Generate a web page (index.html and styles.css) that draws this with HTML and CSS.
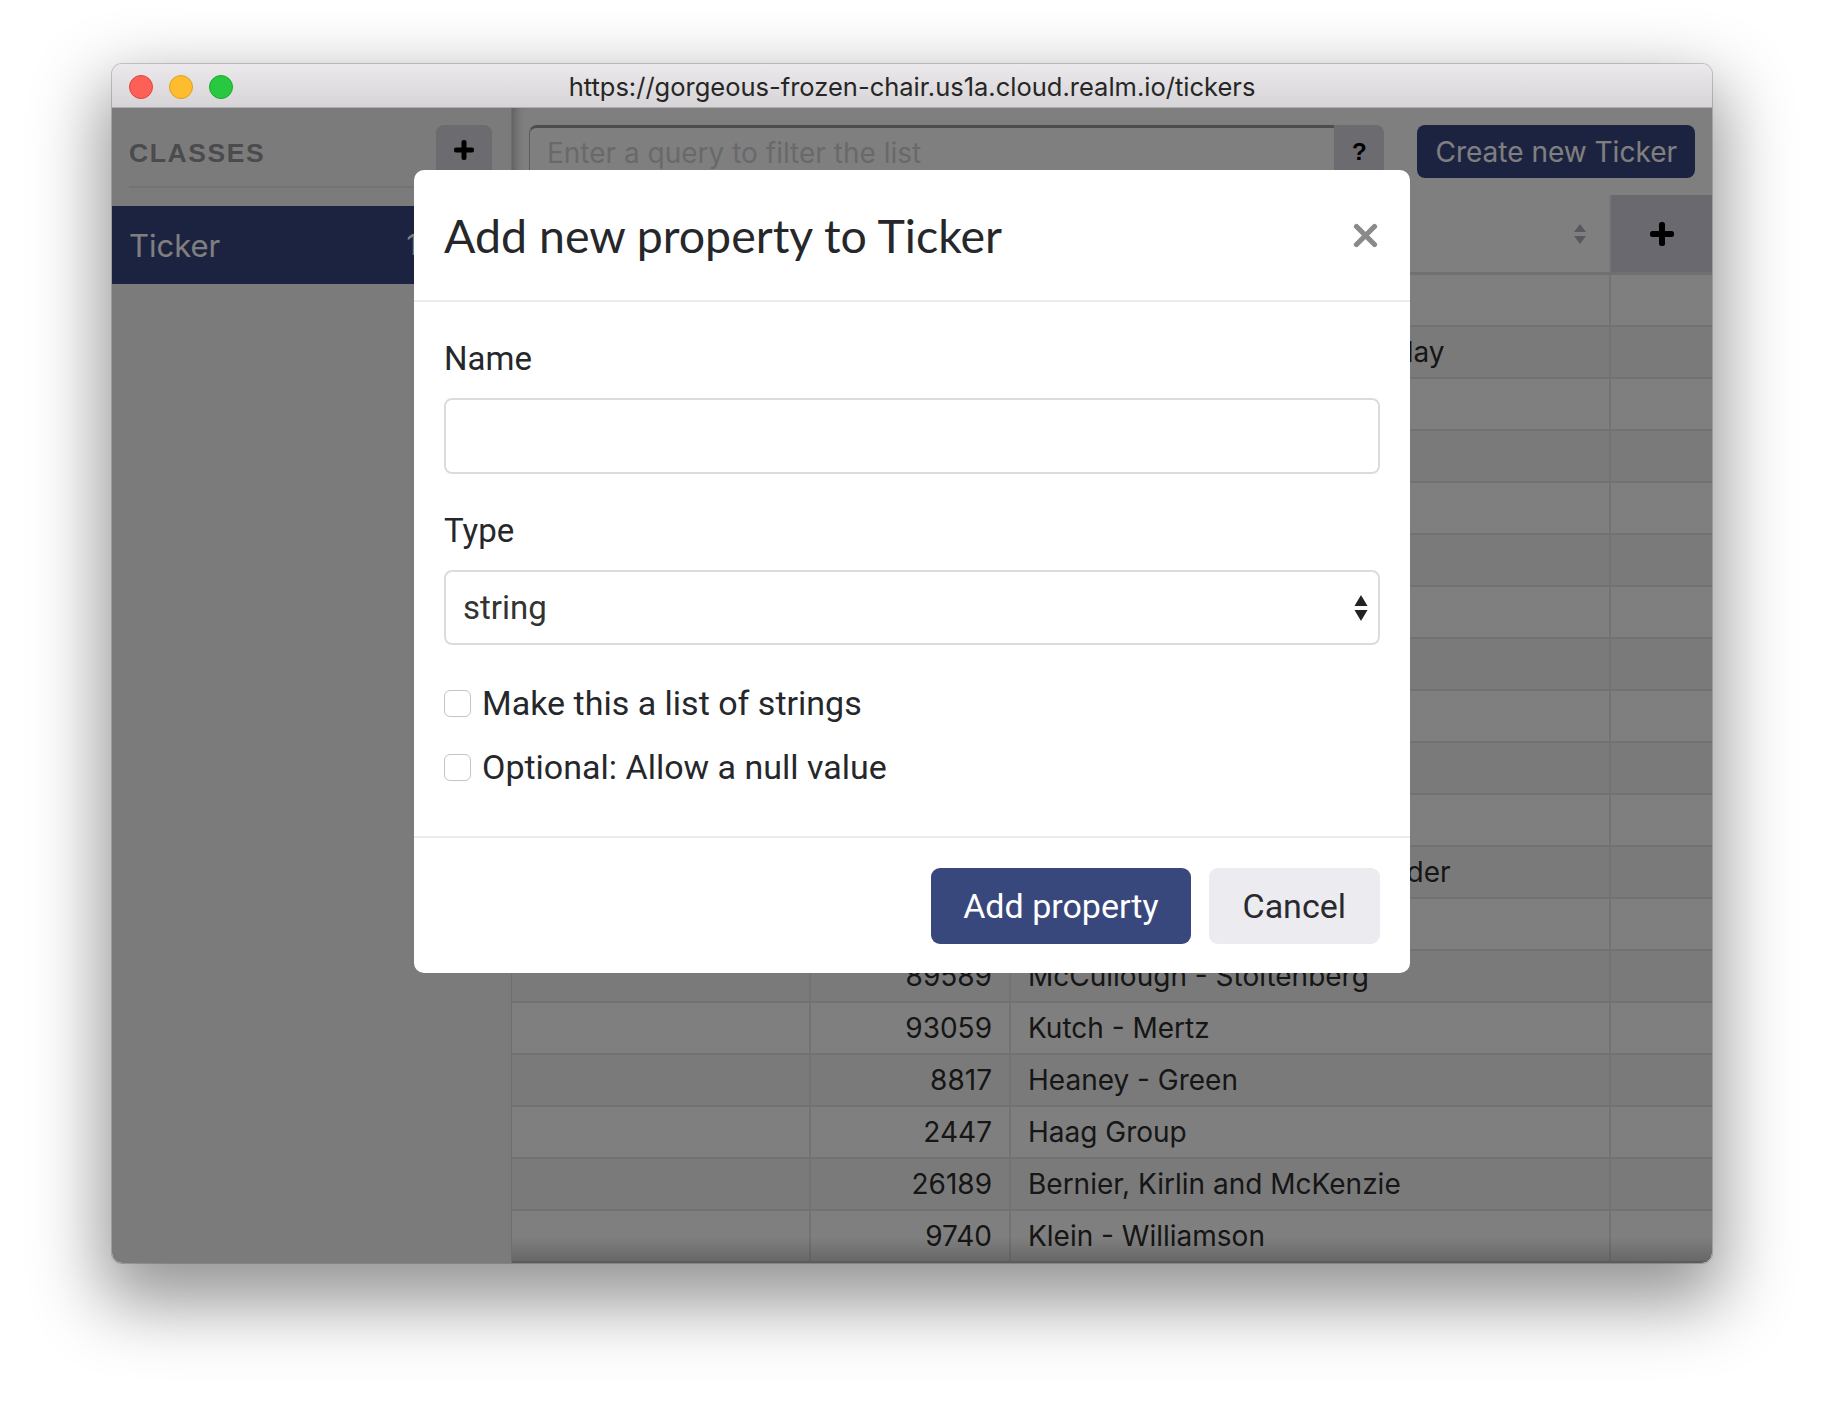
FILE: index.html
```html
<!DOCTYPE html>
<html lang="en">
<head>
<meta charset="utf-8">
<title>Realm Studio - tickers</title>
<link rel="stylesheet" href="styles.css">
</head>
<body>
<div class="stage">
  <div class="window">
    <div class="titlebar">
      <div class="lights">
        <span class="light red"></span>
        <span class="light yellow"></span>
        <span class="light green"></span>
      </div>
      <div class="url">https://gorgeous-frozen-chair.us1a.cloud.realm.io/tickers</div>
    </div>
    <div class="app">
      <aside class="sidebar">
        <div class="side-head">
          <span class="side-title">CLASSES</span>
          <button class="side-add" type="button">
            <svg width="22" height="22" viewBox="0 0 22 22"><rect x="8.5" y="1" width="5" height="20" rx="2" fill="#000"/><rect x="1" y="8.5" width="20" height="5" rx="2" fill="#000"/></svg>
          </button>
        </div>
        <div class="class-item">
          <span class="class-name">Ticker</span>
          <span class="class-count">1000</span>
        </div>
      </aside>
      <main class="main">
        <div class="toolbar">
          <div class="search">
            <div class="search-input">Enter a query to filter the list</div>
            <button class="help" type="button">?</button>
          </div>
          <button class="create" type="button">Create new Ticker</button>
        </div>
        <div class="table">
          <div class="row head">
            <div class="cell c1"></div>
            <div class="cell c2"></div>
            <div class="cell c3 sort-cell"><span class="sort"><svg width="14" height="22" viewBox="0 0 14 22"><path d="M7 1 L13 9 H1 Z" fill="#b2b2ba"/><path d="M7 21 L13 13 H1 Z" fill="#b2b2ba"/></svg></span></div>
            <div class="cell c4 add-col"><svg width="26" height="26" viewBox="0 0 26 26"><rect x="10" y="1" width="6" height="24" rx="2.5" fill="#000"/><rect x="1" y="10" width="24" height="6" rx="2.5" fill="#000"/></svg></div>
          </div>
          <div class="row"><div class="cell c1"></div><div class="cell c2 num">51210</div><div class="cell c3">Rempel - Torp</div><div class="cell c4"></div></div>
          <div class="row"><div class="cell c1"></div><div class="cell c2 num">70318</div><div class="cell c3">Hodkiewicz, Lueilwitz &amp; Display</div><div class="cell c4"></div></div>
          <div class="row"><div class="cell c1"></div><div class="cell c2 num">4512</div><div class="cell c3">Lind Inc</div><div class="cell c4"></div></div>
          <div class="row"><div class="cell c1"></div><div class="cell c2 num">63877</div><div class="cell c3">Wolff - Hane</div><div class="cell c4"></div></div>
          <div class="row"><div class="cell c1"></div><div class="cell c2 num">1290</div><div class="cell c3">Fay LLC</div><div class="cell c4"></div></div>
          <div class="row"><div class="cell c1"></div><div class="cell c2 num">35502</div><div class="cell c3">Ortiz Group</div><div class="cell c4"></div></div>
          <div class="row"><div class="cell c1"></div><div class="cell c2 num">7741</div><div class="cell c3">Kuhn - Bins</div><div class="cell c4"></div></div>
          <div class="row"><div class="cell c1"></div><div class="cell c2 num">80265</div><div class="cell c3">Yost and Sons</div><div class="cell c4"></div></div>
          <div class="row"><div class="cell c1"></div><div class="cell c2 num">22913</div><div class="cell c3">Mann - Hills</div><div class="cell c4"></div></div>
          <div class="row"><div class="cell c1"></div><div class="cell c2 num">6058</div><div class="cell c3">Koss LLC</div><div class="cell c4"></div></div>
          <div class="row"><div class="cell c1"></div><div class="cell c2 num">1834</div><div class="cell c3">Dach Group</div><div class="cell c4"></div></div>
          <div class="row"><div class="cell c1"></div><div class="cell c2 num">47321</div><div class="cell c3">Gerhold Kemmer and Schneider</div><div class="cell c4"></div></div>
          <div class="row"><div class="cell c1"></div><div class="cell c2 num">3306</div><div class="cell c3">Bode Inc</div><div class="cell c4"></div></div>
          <div class="row"><div class="cell c1"></div><div class="cell c2 num">89589</div><div class="cell c3">McCullough - Stoltenberg</div><div class="cell c4"></div></div>
          <div class="row"><div class="cell c1"></div><div class="cell c2 num">93059</div><div class="cell c3">Kutch - Mertz</div><div class="cell c4"></div></div>
          <div class="row"><div class="cell c1"></div><div class="cell c2 num">8817</div><div class="cell c3">Heaney - Green</div><div class="cell c4"></div></div>
          <div class="row"><div class="cell c1"></div><div class="cell c2 num">2447</div><div class="cell c3">Haag Group</div><div class="cell c4"></div></div>
          <div class="row"><div class="cell c1"></div><div class="cell c2 num">26189</div><div class="cell c3">Bernier, Kirlin and McKenzie</div><div class="cell c4"></div></div>
          <div class="row"><div class="cell c1"></div><div class="cell c2 num">9740</div><div class="cell c3">Klein - Williamson</div><div class="cell c4"></div></div>
        </div>
        <div class="bottom-fade"></div>
      </main>
      <div class="backdrop">
        <div class="modal">
          <div class="modal-header">
            <h2 class="modal-title">Add new property to Ticker</h2>
            <svg class="close" width="25" height="25" viewBox="0 0 25 25"><path d="M3.5 3.5 L21.5 21.5 M21.5 3.5 L3.5 21.5" stroke="#8a8a8a" stroke-width="5.2" stroke-linecap="round"/></svg>
          </div>
          <div class="modal-body">
            <label class="field-label">Name</label>
            <div class="field-input"></div>
            <label class="field-label type-label">Type</label>
            <div class="field-select">
              <span>string</span>
              <svg class="select-arrows" width="14" height="28" viewBox="0 0 14 28"><path d="M7 1 L13.5 12 H0.5 Z" fill="#222"/><path d="M7 27 L13.5 16 H0.5 Z" fill="#222"/></svg>
            </div>
            <div class="check-row first"><span class="checkbox"></span><span>Make this a list of strings</span></div>
            <div class="check-row"><span class="checkbox"></span><span>Optional: Allow a null value</span></div>
          </div>
          <div class="modal-footer">
            <button class="btn primary" type="button">Add property</button>
            <button class="btn secondary" type="button">Cancel</button>
          </div>
        </div>
      </div>
    </div>
  </div>
</div>
</body>
</html>
```

FILE: styles.css
```css
* { box-sizing: border-box; }
html, body { margin: 0; padding: 0; background: #ffffff; }
body { font-family: Inter, "Noto Sans", "Liberation Sans", sans-serif; color: #2c2c2c; }

.stage { padding: 64px 0 0 112px; width: 1824px; height: 1424px; }

.window {
  width: 1600px;
  height: 1199px;
  border-radius: 10px;
  overflow: hidden;
  display: flex;
  flex-direction: column;
  box-shadow: 0 30px 70px 10px rgba(0,0,0,0.42), 0 0 0 1px rgba(0,0,0,0.18);
}

.titlebar {
  height: 44px;
  flex: none;
  display: flex;
  align-items: center;
  position: relative;
  background: linear-gradient(#ebe9eb, #d6d4d6);
  border-bottom: 1px solid #aeacae;
}
.lights { display: flex; gap: 16px; padding-left: 17px; padding-top: 2px; }
.light { width: 24px; height: 24px; border-radius: 50%; display: block; }
.light.red { background: #fe5f57; border: 1px solid #e0443e; }
.light.yellow { background: #febc2e; border: 1px solid #dea123; }
.light.green { background: #28c840; border: 1px solid #1aab29; }
.url {
  position: absolute; left: 0; right: 0; top: 2px; bottom: 0;
  display: flex; align-items: center; justify-content: center;
  font-size: 25.5px; color: #262626;
}

.app { flex: 1; display: flex; position: relative; min-height: 0; }

.sidebar {
  width: 400px; flex: none;
  background: #f6f6f8;
  border-right: 1px solid #dcdce2;
  display: flex; flex-direction: column;
}
.side-head {
  display: flex; align-items: center; justify-content: space-between;
  margin: 0 19px 0 17px;
  height: 80px;
  border-bottom: 2px solid #e6e6ea;
  padding-top: 12px;
}
.side-title { font-weight: 700; font-size: 26.5px; letter-spacing: 1.6px; color: #96969a; font-family: "Liberation Sans", Inter, sans-serif; }
.side-add {
  width: 56px; height: 51px; border: 0; border-radius: 8px;
  background: #d6d6e0; display: flex; align-items: center; justify-content: center;
  padding: 0; margin-top: -6px;
}
.class-item {
  margin-top: 18px;
  height: 78px;
  background: #384680;
  display: flex; align-items: center; justify-content: space-between;
  padding: 0 40px 0 17px;
}
.class-name { font-size: 31px; color: #ffffff; }
.class-count { font-size: 28px; color: #ffffff; }

.main {
  flex: 1; min-width: 0; background: #ffffff;
  display: flex; flex-direction: column; position: relative;
  box-shadow: inset 12px 0 12px -10px rgba(0,0,0,0.35);
}
.toolbar {
  height: 87px; flex: none;
  display: flex; align-items: flex-start;
  padding: 17px 17px 0 17px;
  gap: 33px;
}
.search { flex: 1; display: flex; height: 54px; }
.search-input {
  flex: 1; border: 1px solid #b8b8bc; border-top: 3px solid #9a9a9e; border-right: 0;
  border-radius: 8px 0 0 8px;
  background: #fff; color: #d2d2d6;
  font-size: 28px; display: flex; align-items: center; padding: 0 17px;
}
.help {
  width: 50px; border: 0; border-radius: 0 8px 8px 0;
  background: #d6d6e0; font-weight: 700; font-size: 24px; color: #000;
  font-family: "Liberation Sans", sans-serif; padding: 0;
}
.create {
  height: 53px; border: 0; border-radius: 8px;
  background: #384680; color: #ffffff; font-family: inherit;
  font-size: 28px; padding: 0 18px; white-space: nowrap;
}

.table { display: flex; flex-direction: column; }
.row { display: flex; height: 52px; flex: none; border-bottom: 2px solid #e4e4e9; background: #ffffff; }
.row:nth-child(odd) { background: #f5f5f7; }
.row.head { height: 80px; background: #ffffff; border-bottom: 3px solid #e0e0e6; }
.cell { display: flex; align-items: center; font-size: 28px; color: #2c2c2c; white-space: nowrap; overflow: hidden; }
.c1 { width: 299px; border-right: 2px solid #e6e6ea; }
.c2 { width: 200px; border-right: 2px solid #e6e6ea; justify-content: flex-end; padding-right: 17px; }
.c3 { width: 600px; border-right: 2px solid #e6e6ea; padding-left: 17px; }
.c4 { flex: 1; }
.sort-cell { justify-content: flex-end; padding-right: 22px; }
.sort { display: flex; }
.add-col { background: #d4d2e0; justify-content: center; }
.head .cell { border-right-color: #ececf0; }

.bottom-fade {
  position: absolute; left: 0; right: 0; bottom: 0; height: 26px;
  background: linear-gradient(rgba(0,0,0,0), rgba(0,0,0,0.2));
}

.backdrop {
  position: absolute; left: 0; top: 0; right: 0; bottom: 0;
  background: rgba(0,0,0,0.5);
}
.modal {
  position: absolute; left: 302px; top: 62px;
  width: 996px; height: 803px;
  background: #ffffff; border-radius: 10px;
  display: flex; flex-direction: column;
  font-family: Roboto, Inter, sans-serif;
}
.modal-header {
  height: 132px; flex: none;
  display: flex; align-items: center; justify-content: space-between;
  padding: 0 32px 0 30px;
  border-bottom: 2px solid #ececef;
}
.modal-title {
  margin: 0; font-family: Lato, "Noto Sans", sans-serif; font-weight: 400;
  font-size: 46.5px; color: #25272b; letter-spacing: 0;
}
.close { display: block; }
.modal-body {
  flex: 1; padding: 40px 30px 0 30px;
  display: flex; flex-direction: column;
}
.field-label { font-size: 33px; line-height: 34px; color: #25272b; margin-bottom: 22px; }
.type-label { margin-top: 40px; }
.field-input {
  height: 76px; border: 2px solid #dcdcdc; border-radius: 8px; background: #fff;
}
.field-select {
  height: 75px; border: 2px solid #dcdcdc; border-radius: 8px; background: #fff;
  display: flex; align-items: center; justify-content: space-between;
  padding: 0 10px 0 17px; font-size: 33px; color: #333;
}
.check-row {
  display: flex; align-items: center; gap: 11px;
  font-size: 34px; line-height: 34px; color: #25272b;
  margin-top: 30px;
}
.check-row.first { margin-top: 41px; }
.checkbox {
  width: 27px; height: 27px; border: 1.5px solid #c4c4c4; border-radius: 6px;
  background: #fff; flex: none;
}
.modal-footer {
  height: 137px; flex: none;
  border-top: 2px solid #ececef;
  display: flex; justify-content: flex-end; align-items: flex-start;
  gap: 18px; padding: 30px 30px 0 30px;
}
.btn {
  height: 76px; border: 0; border-radius: 9px;
  font-family: inherit; font-size: 34px; padding: 0 32px;
}
.btn.primary { background: #39487c; color: #ffffff; }
.btn.secondary { background: #ebebf0; color: #2a2a2e; padding: 0 34px; }
```
